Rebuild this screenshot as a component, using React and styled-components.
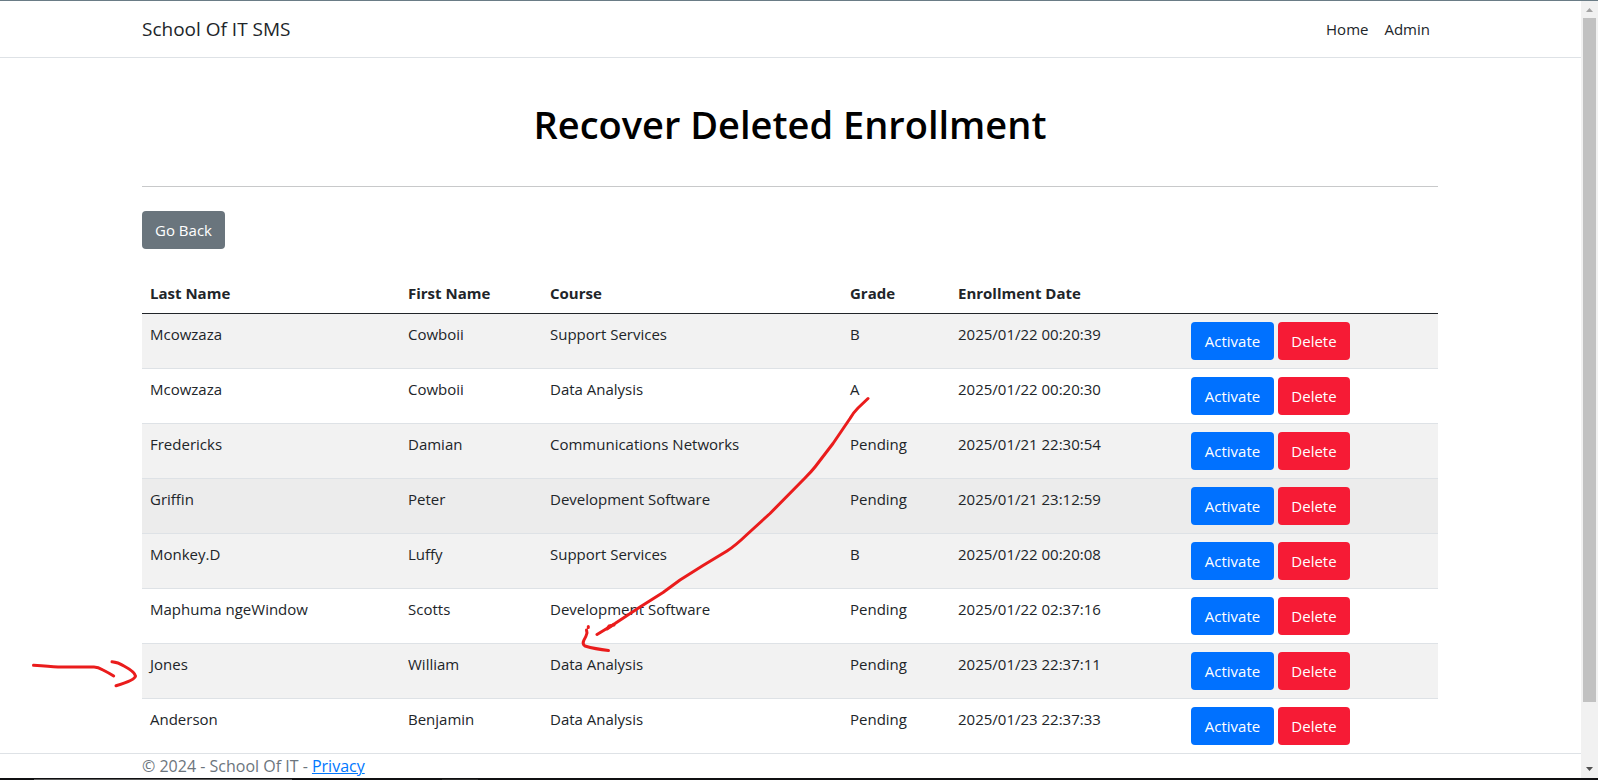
import React from "react";
import styled, { createGlobalStyle } from "styled-components";

const GlobalStyle = createGlobalStyle`
  *, *::before, *::after { box-sizing: border-box; }
  body {
    margin: 0;
    background: #fff;
    color: #212529;
    font-family: "Segoe UI", "Open Sans", "Noto Sans", sans-serif;
    font-size: 15px;
    line-height: 24px;
  }
`;

const Screen = styled.div`
  position: relative;
  min-height: 100vh;
  display: flex;
  flex-direction: column;
  border-top: 1px solid #6a7c86;
`;

const Viewport = styled.div`
  flex: 1;
  display: flex;
`;

const Page = styled.div`
  flex: 1;
  min-width: 0;
  display: flex;
  flex-direction: column;
`;

const Container = styled.div`
  width: 100%;
  max-width: 1321px;
  margin: 0 auto;
  padding: 0 13px 0 12px;
`;

const Header = styled.header`
  border-bottom: 1px solid #dee2e6;
`;

const Nav = styled.nav`
  display: flex;
  align-items: center;
  justify-content: space-between;
  height: 56px;
`;

const Brand = styled.a`
  color: #212529;
  font-size: 19px;
  line-height: 30px;
  text-decoration: none;
`;

const NavLinks = styled.div`
  display: flex;
  gap: 16px;
  padding-right: 8px;
`;

const NavLink = styled.a`
  color: #212529;
  text-decoration: none;
`;

const Main = styled.main`
  flex: 1;
`;

const Title = styled.h1`
  margin: 0;
  padding: 42px 0 38px;
  border-bottom: 1px solid #c8c9ca;
  color: #000;
  font-size: 38px;
  font-weight: 600;
  line-height: 48px;
  text-align: center;
`;

const Button = styled.button`
  height: 38px;
  min-width: ${(p) => p.$width}px;
  padding: 0 12px;
  border: 0;
  border-radius: 4px;
  background: ${(p) => p.$color};
  color: #fff;
  font: inherit;
  cursor: pointer;
`;

const Toolbar = styled.div`
  display: flex;
  padding: 24px 0;
`;

const Table = styled.table`
  width: 100%;
  table-layout: fixed;
  border-collapse: separate;
  border-spacing: 0;
`;

const Column = styled.col`
  width: ${(p) => p.$width}px;
`;

const HeadCell = styled.th`
  padding: 8px;
  border-bottom: 1px solid #212529;
  text-align: left;
  font-weight: 700;
`;

const Row = styled.tr`
  background: ${(p) => (p.$active ? "#ececec" : "#fff")};
  &:nth-child(odd) { background: #f2f2f2; }
  &:last-child > td { border-bottom: 0; }
`;

const Cell = styled.td`
  padding: 8px;
  border-bottom: 1px solid #dee2e6;
  vertical-align: top;
`;

const Actions = styled.div`
  display: flex;
  gap: 4px;
`;

const Footer = styled.footer`
  border-top: 1px solid #dee2e6;
  color: #6c757d;
  font-size: 16px;
`;

const PrivacyLink = styled.a`
  color: #0077ff;
`;

const ScrollTrack = styled.div`
  width: 17px;
  display: flex;
  flex-direction: column;
  background: #f1f1f1;
`;

const ScrollArrow = styled.svg`
  flex: none;
  width: 17px;
  height: 17px;
  fill: ${(p) => p.$color};
`;

const ScrollRail = styled.div`
  flex: 1;
  padding: 0 2px;
`;

const ScrollThumb = styled.div`
  height: 92%;
  background: #c1c1c1;
`;

const TaskEdge = styled.div`
  display: flex;
  height: 2px;
  padding: 1px 0 0 34px;
  gap: 150px;
  background: #101012;
`;

const TaskMark = styled.div`
  width: ${(p) => p.$width}px;
  background: ${(p) => p.$color};
`;

const Ink = styled.svg`
  position: absolute;
  inset: -1px 0 0 0;
  width: 100%;
  height: 100%;
  pointer-events: none;
  fill: none;
  stroke: #ea1c1c;
  stroke-width: 3px;
  stroke-linecap: round;
  stroke-linejoin: round;
`;

const columns = [
  { label: "Last Name", width: 258 },
  { label: "First Name", width: 142 },
  { label: "Course", width: 300 },
  { label: "Grade", width: 108 },
  { label: "Enrollment Date", width: 233 },
  { label: "", width: 255 },
];

const enrollments = [
  ["Mcowzaza", "Cowboii", "Support Services", "B", "2025/01/22 00:20:39"],
  ["Mcowzaza", "Cowboii", "Data Analysis", "A", "2025/01/22 00:20:30"],
  ["Fredericks", "Damian", "Communications Networks", "Pending", "2025/01/21 22:30:54"],
  ["Griffin", "Peter", "Development Software", "Pending", "2025/01/21 23:12:59"],
  ["Monkey.D", "Luffy", "Support Services", "B", "2025/01/22 00:20:08"],
  ["Maphuma ngeWindow", "Scotts", "Development Software", "Pending", "2025/01/22 02:37:16"],
  ["Jones", "William", "Data Analysis", "Pending", "2025/01/23 22:37:11"],
  ["Anderson", "Benjamin", "Data Analysis", "Pending", "2025/01/23 22:37:33"],
];

const activeRow = 3;

export default function App() {
  return (
    <>
      <GlobalStyle />
      <Screen>
        <Viewport>
          <Page>
            <Header>
              <Container>
                <Nav>
                  <Brand href="#">School Of IT SMS</Brand>
                  <NavLinks>
                    <NavLink href="#">Home</NavLink>
                    <NavLink href="#">Admin</NavLink>
                  </NavLinks>
                </Nav>
              </Container>
            </Header>
            <Main>
              <Container>
                <Title>Recover Deleted Enrollment</Title>
                <Toolbar>
                  <Button type="button" $color="#6a757d" $width={83}>Go Back</Button>
                </Toolbar>
                <Table>
                  <colgroup>
                    {columns.map((c, i) => <Column key={i} $width={c.width} />)}
                  </colgroup>
                  <thead>
                    <tr>
                      {columns.map((c, i) => <HeadCell key={i}>{c.label}</HeadCell>)}
                    </tr>
                  </thead>
                  <tbody>
                    {enrollments.map((values, i) => (
                      <Row key={i} $active={i === activeRow}>
                        {values.map((v, j) => <Cell key={j}>{v}</Cell>)}
                        <Cell>
                          <Actions>
                            <Button type="button" $color="#0071ff" $width={83}>Activate</Button>
                            <Button type="button" $color="#f61b35" $width={72}>Delete</Button>
                          </Actions>
                        </Cell>
                      </Row>
                    ))}
                  </tbody>
                </Table>
              </Container>
            </Main>
            <Footer>
              <Container>
                © 2024 - School Of IT - <PrivacyLink href="#">Privacy</PrivacyLink>
              </Container>
            </Footer>
          </Page>
          <ScrollTrack aria-hidden="true">
            <ScrollArrow $color="#a3a3a3" viewBox="0 0 17 17"><path d="M5 11h7L8.500 7z" /></ScrollArrow>
            <ScrollRail><ScrollThumb /></ScrollRail>
            <ScrollArrow $color="#505050" viewBox="0 0 17 17"><path d="M5 6h7L8.500 10z" /></ScrollArrow>
          </ScrollTrack>
        </Viewport>
        <TaskEdge>
          <TaskMark $width={258} $color="#5c5c5c" />
          <TaskMark $width={36} $color="#2c2c2c" />
        </TaskEdge>
        <Ink aria-hidden="true">
          <path d="M868 398.500L858 408Q853 413 850 418.500L833 443.500L815 467Q811 472 805 478L770 513.500L747 534.500Q735 546 727 551L703 565.500L680 580L663 592.500L640 607L615 623.500L597 634.500" />
          <path d="M613 625L607 629L609 626L614 625" />
          <path d="M588.300 626.500V627.500M586.500 630L587 633Q586 637 584 640Q582 644 585 646Q595 649 608.500 650.500" />
          <path d="M33.500 665.300Q50 666.500 58 667H94Q98 667 103 670Q109 673 113.700 676" />
          <path d="M112 661.700Q118 662 124 666Q135 672 135.500 676Q135 680 116 685.800" />
        </Ink>
      </Screen>
    </>
  );
}
